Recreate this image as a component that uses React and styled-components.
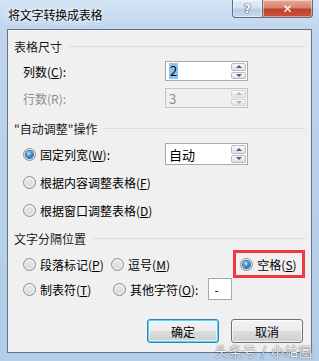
import styled, { createGlobalStyle } from "styled-components";

const GlobalStyle = createGlobalStyle`
  html, body {
    margin: 0;
    padding: 0;
    background: #ffffff;
  }
  body {
    font-family: "Noto Sans CJK SC", "Noto Sans", sans-serif;
    font-size: 12px;
  }
`;

const Frame = styled.div`
  position: relative;
  width: 319px;
  height: 361px;
  box-sizing: border-box;
  display: flex;
  flex-direction: column;
  background: linear-gradient(180deg, #d3e3f4 0%, #c0d6ee 8%, #b8d0ea 40%, #b4cde8 100%);
  overflow: hidden;
`;

const TitleBar = styled.div`
  height: 29px;
  display: flex;
  align-items: center;
  padding-left: 8px;
  flex-shrink: 0;
`;

const Title = styled.div`
  font-size: 12px;
  color: #000;
  text-shadow: 0 0 6px #ffffff, 0 0 3px #ffffff;
  letter-spacing: -0.2px;
`;

const Caption = styled.div`
  display: flex;
  margin-left: auto;
  margin-right: 6px;
  align-self: flex-start;
`;

const CapButton = styled.div`
  height: 18px;
  width: ${(p) => p.$w}px;
  box-sizing: border-box;
  border: 1px solid #5d6c85;
  border-top: none;
  display: flex;
  align-items: center;
  justify-content: center;
  font-family: "DejaVu Sans", sans-serif;
  font-weight: bold;
  color: #fff;
  background: ${(p) =>
    p.$close
      ? "linear-gradient(180deg, #e9a99a 0%, #d9826f 45%, #c0412b 55%, #c9533b 100%)"
      : "linear-gradient(180deg, #e5eef8 0%, #d3e1f1 45%, #b9cde6 55%, #c8d9ee 100%)"};
  border-radius: ${(p) => (p.$close ? "0 0 4px 0" : "0 0 0 4px")};
  border-left: ${(p) => (p.$close ? "none" : "1px solid #5d6c85")};
  box-shadow: inset 0 0 0 1px rgba(255, 255, 255, 0.45);
`;

const HelpGlyph = styled.span`
  font-size: 13px;
  color: #ffffff;
  text-shadow: 0 0 1px #3c4c66, 0 0 1px #3c4c66, 0 0 1px #3c4c66;
`;

const Client = styled.div`
  flex: 1;
  margin: 0 7px 8px 7px;
  border: 1px solid #64728a;
  background: #f0f0f0;
  padding: 0 6px 9px 6px;
  display: flex;
  flex-direction: column;
`;

const Header = styled.div`
  height: 16px;
  margin-top: ${(p) => p.$top}px;
  display: flex;
  align-items: center;
  color: #1a1a1a;
  &::after {
    content: "";
    flex: 1;
    height: 1px;
    margin-left: 6px;
    background: #d5dfe5;
  }
`;

const Row = styled.div`
  height: ${(p) => p.$h}px;
  margin-top: ${(p) => p.$top}px;
  padding-left: 9px;
  display: flex;
  align-items: center;
`;

const FieldLabel = styled.div`
  width: 142px;
  color: ${(p) => (p.$disabled ? "#8d8d8d" : "#000")};
`;

const Spin = styled.div`
  width: 83px;
  height: ${(p) => p.$h}px;
  box-sizing: border-box;
  border: 1px solid ${(p) => (p.$disabled ? "#c4c4c4" : "#a9a9a9")};
  background: ${(p) => (p.$disabled ? "#f0f0f0" : "#ffffff")};
  display: flex;
  align-items: center;
  padding: 1px 1px 1px 3px;
`;

const SpinValue = styled.div`
  flex: 1;
  display: flex;
  align-items: center;
  font-size: 13px;
  color: ${(p) => (p.$disabled ? "#8d8d8d" : "#000")};
`;

const Selected = styled.span`
  background: #8ec4f2;
  padding: 0 1px;
  line-height: 16px;
`;

const SpinButtons = styled.div`
  align-self: stretch;
  width: 15px;
  display: flex;
  flex-direction: column;
  gap: 1px;
`;

const SpinButton = styled.div`
  flex: 1;
  box-sizing: border-box;
  border: 1px solid ${(p) => (p.$disabled ? "#d6d6d6" : "#b8bcc2")};
  border-radius: 2px;
  background: linear-gradient(180deg, #fafafa 0%, #ececec 50%, #e0e0e0 100%);
  display: flex;
  align-items: center;
  justify-content: center;
  &::after {
    content: "";
    width: 0;
    height: 0;
    border-left: 3px solid transparent;
    border-right: 3px solid transparent;
    ${(p) => (p.$down ? "border-top" : "border-bottom")}: 3px solid
      ${(p) => (p.$disabled ? "#b4b4b4" : "#4d5f80")};
  }
`;

const Radio = styled.label`
  display: flex;
  align-items: center;
  gap: 4px;
  color: #000;
  white-space: nowrap;
  width: ${(p) => (p.$w ? `${p.$w}px` : "auto")};
`;

const RadioDot = styled.span`
  width: 13px;
  height: 13px;
  box-sizing: border-box;
  border-radius: 50%;
  border: 1px solid #8c8e90;
  background: radial-gradient(circle at 50% 40%, #ffffff 0%, #f0f0f0 45%, #d4d4d4 100%);
  display: flex;
  align-items: center;
  justify-content: center;
  flex-shrink: 0;
  &::after {
    content: "";
    width: 7px;
    height: 7px;
    border-radius: 50%;
    background: ${(p) =>
      p.$checked
        ? "radial-gradient(circle at 40% 35%, #bfe3ff 0%, #3d95dc 45%, #154c85 100%)"
        : "radial-gradient(circle at 50% 40%, #e8e8e8 0%, #d6d6d6 100%)"};
    box-shadow: ${(p) => (p.$checked ? "0 0 0 1px #2d6aa6" : "none")};
  }
`;

const Mark = styled.div`
  height: 28px;
  box-sizing: border-box;
  width: 73px;
  border: 3px solid #ec3a3d;
  padding-left: 4px;
  display: flex;
  align-items: center;
`;

const SmallBox = styled.div`
  width: 24px;
  height: 22px;
  box-sizing: border-box;
  border: 1px solid #a9a9a9;
  background: #ffffff;
  margin-left: 10px;
  padding-left: 5px;
  display: flex;
  align-items: center;
`;

const Buttons = styled.div`
  margin-top: 19px;
  display: flex;
  justify-content: flex-end;
  gap: 12px;
  padding-right: 2px;
`;

const Button = styled.div`
  width: 72px;
  height: 24px;
  box-sizing: border-box;
  border: 1px solid ${(p) => (p.$default ? "#3c7fb1" : "#707070")};
  border-radius: 3px;
  background: linear-gradient(180deg, #f2f2f2 0%, #ebebeb 50%, #dddddd 51%, #cfcfcf 100%);
  box-shadow: ${(p) =>
    p.$default ? "inset 0 0 0 1px #48d9ff, inset 0 0 0 2px rgba(255,255,255,0.5)" : "inset 0 0 0 1px rgba(255,255,255,0.7)"};
  display: flex;
  align-items: center;
  justify-content: center;
  color: #000;
`;

const Watermark = styled.div`
  position: absolute;
  right: 6px;
  bottom: 1px;
  font-size: 13px;
  color: rgba(255, 255, 255, 0.95);
  text-shadow: 0 0 1px rgba(60, 60, 60, 0.9), 0 0 2px rgba(60, 60, 60, 0.5);
  letter-spacing: 1px;
`;

const Spinner = ({ value, h, disabled, selected }) => (
  <Spin $h={h} $disabled={disabled}>
    <SpinValue $disabled={disabled}>
      {selected ? <Selected>{value}</Selected> : value}
    </SpinValue>
    <SpinButtons>
      <SpinButton $disabled={disabled} />
      <SpinButton $disabled={disabled} $down />
    </SpinButtons>
  </Spin>
);

const Option = ({ checked, w, children }) => (
  <Radio $w={w}>
    <RadioDot $checked={checked} />
    <span>{children}</span>
  </Radio>
);

export default function App() {
  return (
    <>
      <GlobalStyle />
      <Frame>
        <TitleBar>
          <Title>将文字转换成表格</Title>
          <Caption>
            <CapButton $w={31}>
              <HelpGlyph>?</HelpGlyph>
            </CapButton>
            <CapButton $w={50} $close>
              ✕
            </CapButton>
          </Caption>
        </TitleBar>
        <Client>
          <Header $top={8}>表格尺寸</Header>
          <Row $h={20} $top={7}>
            <FieldLabel>
              列数(<u>C</u>):
            </FieldLabel>
            <Spinner value="2" h={20} selected />
          </Row>
          <Row $h={20} $top={7}>
            <FieldLabel $disabled>行数(R):</FieldLabel>
            <Spinner value="3" h={20} disabled />
          </Row>

          <Header $top={12}>"自动调整"操作</Header>
          <Row $h={22} $top={7}>
            <Option checked w={142}>
              固定列宽(<u>W</u>):
            </Option>
            <Spinner value="自动" h={22} />
          </Row>
          <Row $h={20} $top={7}>
            <Option>
              根据内容调整表格(<u>F</u>)
            </Option>
          </Row>
          <Row $h={20} $top={8}>
            <Option>
              根据窗口调整表格(<u>D</u>)
            </Option>
          </Row>

          <Header $top={10}>文字分隔位置</Header>
          <Row $h={28} $top={4}>
            <Option w={90}>
              段落标记(<u>P</u>)
            </Option>
            <Option w={125}>
              逗号(<u>M</u>)
            </Option>
            <Mark>
              <Option checked>
                空格(<u>S</u>)
              </Option>
            </Mark>
          </Row>
          <Row $h={22} $top={0}>
            <Option w={90}>
              制表符(<u>T</u>)
            </Option>
            <Option>
              其他字符(<u>O</u>):
            </Option>
            <SmallBox>-</SmallBox>
          </Row>

          <Buttons>
            <Button $default>确定</Button>
            <Button>取消</Button>
          </Buttons>
        </Client>
        <Watermark>头条号 / 小站圈</Watermark>
      </Frame>
    </>
  );
}
